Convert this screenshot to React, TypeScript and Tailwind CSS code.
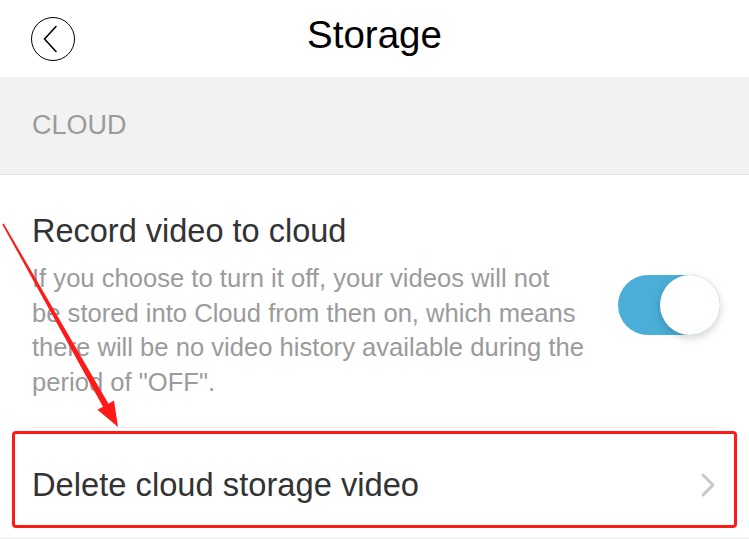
import React from "react";

function BackButton() {
  return (
    <div className="flex h-[44px] w-[44px] items-center justify-center rounded-full border-[1.5px] border-black">
      <svg className="-ml-[6px]" width="16" height="28" viewBox="0 0 16 28" fill="none">
        <path d="M14 1.5 L2.5 14 L14 26.5" stroke="#000" strokeWidth="1.6" strokeLinecap="round" strokeLinejoin="round" />
      </svg>
    </div>
  );
}

function Toggle() {
  return (
    <div className="relative h-[60px] w-[102px] shrink-0 rounded-full bg-[#4aaed8]">
      <div className="absolute right-0 top-0 h-[60px] w-[60px] rounded-full bg-white shadow-[0_3px_8px_rgba(0,0,0,0.18)]" />
    </div>
  );
}

function Chevron() {
  return (
    <svg width="16" height="26" viewBox="0 0 16 26" fill="none">
      <path d="M3 3 L13 13 L3 23" stroke="#c7c7cc" strokeWidth="3" strokeLinecap="round" strokeLinejoin="round" />
    </svg>
  );
}

function Annotation() {
  return (
    <>
      <svg className="pointer-events-none absolute left-0 top-0" width="749" height="539">
        <polygon
          points="2.3,224.4 3.7,223.6 108.5,403.7 114,400.6 118,427 97.5,409.8 103,406.7"
          fill="#ff1a1a"
        />
      </svg>
      <div className="pointer-events-none absolute left-[12px] top-[431px] h-[97px] w-[725px] rounded-[4px] border-[3px] border-[#ff1a1a]" />
    </>
  );
}

export default function App() {
  return (
    <div className="relative h-[539px] w-[749px] overflow-hidden bg-[#f2f2f2] font-['Liberation_Sans',Arial,sans-serif]">
      <header className="grid h-[77px] grid-cols-[1fr_auto_1fr] items-center bg-white px-[31px]">
        <BackButton />
        <h1 className="pb-[7px] text-[38.5px] leading-none text-black">Storage</h1>
        <div />
      </header>

      <div className="flex h-[98px] items-center border-b border-[#e3e3e3] bg-[#f2f2f2] px-[32px]">
        <span className="text-[27px] text-[#9b9b9b]">CLOUD</span>
      </div>

      <section className="bg-white">
        <div className="flex items-center justify-between pl-[32px] pr-[29px] pb-[28px] pt-[36px]">
          <div>
            <div className="text-[32.5px] leading-[40px] text-[#333333]">Record video to cloud</div>
            <div className="mt-[10px] text-[25.6px] leading-[34.5px] text-[#9b9b9b]">
              <div>If you choose to turn it off, your videos will not</div>
              <div>be stored into Cloud from then on, which means</div>
              <div>there will be no video history available during the</div>
              <div>period of "OFF".</div>
            </div>
          </div>
          <Toggle />
        </div>
        <div className="mx-[32px] border-t border-[#ececec]" />
        <div className="flex h-[109px] items-center justify-between pl-[32px] pr-[33px] pt-[5px]">
          <span className="text-[32.7px] text-[#333333]">Delete cloud storage video</span>
          <Chevron />
        </div>
      </section>

      <Annotation />
    </div>
  );
}
